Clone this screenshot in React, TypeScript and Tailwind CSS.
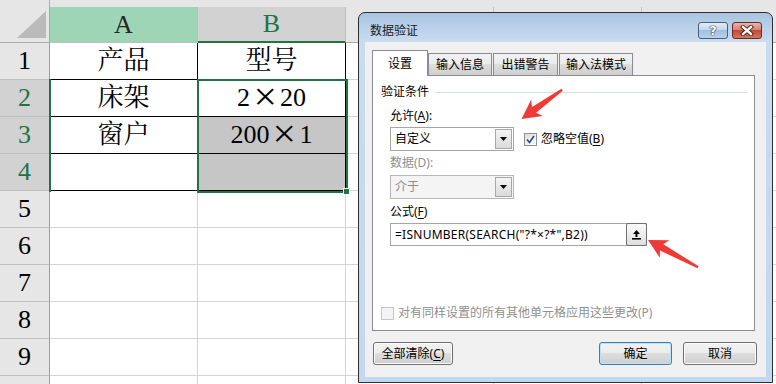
import React from "react";

const cells: Record<number, string[]> = {
  1: ["产品", "型号"],
  2: ["床架", "2×20"],
  3: ["窗户", "200×1"],
  4: ["", ""],
};

// the × in the sheet is a full-width glyph
function CellText({ text }: { text: string }) {
  const parts = text.split("×");
  return (
    <span className="whitespace-nowrap">
      {parts.map((p, i) => (
        <React.Fragment key={i}>
          {i > 0 && (
            <span className="inline-block w-[30px] text-center">
              <span className="inline-block origin-center scale-x-[1.6] scale-y-[1.5] font-light">×</span>
            </span>
          )}
          {p}
        </React.Fragment>
      ))}
    </span>
  );
}

function Sheet() {
  const rows = [1, 2, 3, 4, 5, 6, 7, 8, 9, 10];
  const cols = ["A", "B", "C", "D", "E"];
  return (
    <div className="relative grid grid-cols-[50px_148px_148px_148px_148px_148px] grid-rows-[43px_repeat(10,37px)] font-['Liberation_Serif','Noto_Serif_CJK_SC','Noto_Sans_CJK_SC',serif] text-[26px] leading-none">
      {/* corner */}
      <div className="flex items-end justify-end border-r border-b border-[#ababab] bg-[#e6e6e6] pr-[3px] pb-[4px]">
        <div className="h-[27px] w-[29px] bg-[#bababa] [clip-path:polygon(100%_0,100%_100%,0_100%)]" />
      </div>

      {cols.map((c) => (
        <div key={c} className="flex flex-col bg-[#e6e6e6]">
          <div className="h-[7px]" />
          {c === "A" ? (
            <div className="flex flex-1 items-center justify-center border-r border-b border-[#bdbdbd] bg-[#9fd5b7] text-[#262626]">
              A
            </div>
          ) : c === "B" ? (
            <div className="flex flex-1 items-center justify-center border-r border-[#bdbdbd] border-b-2 border-b-[#217346] bg-[#d2d2d2] text-[#217346]">
              B
            </div>
          ) : (
            <div className="flex flex-1 items-center justify-center border-r border-b border-[#c6c6c6] border-b-[#ababab] text-[#262626]">
              {c}
            </div>
          )}
        </div>
      ))}

      {rows.map((r) => (
        <React.Fragment key={r}>
          <div
            className={`flex items-center justify-center border-r border-b border-r-[#9b9b9b] border-b-[#bfbfbf] ${
              r >= 2 && r <= 4 ? "bg-[#d2d2d2] text-[#217346]" : "bg-[#e6e6e6] text-black"
            }`}
          >
            {r < 10 ? r : null}
          </div>
          {cols.map((c, ci) => {
            const inTable = r <= 4 && ci < 2;
            const filled = ci === 1 && (r === 3 || r === 4);
            return (
              <div
                key={c}
                className={`flex items-center justify-center border-r border-b text-black ${
                  inTable ? "border-black" : "border-[#d4d4d4]"
                } ${filled ? "bg-[#c6c6c6]" : "bg-white"}`}
              >
                {inTable && cells[r][ci] ? <CellText text={cells[r][ci]} /> : null}
              </div>
            );
          })}
        </React.Fragment>
      ))}

      {/* selection */}
      <div className="absolute left-[49px] top-[79px] h-[113px] w-[2px] bg-[#217346]" />
      <div className="absolute left-[197px] top-[79px] h-[114px] w-[151px] border-2 border-[#217346]" />
      <div className="absolute left-[343px] top-[188px] h-[7px] w-[7px] border border-white bg-[#217346]" />
    </div>
  );
}

function Btn({
  children,
  className = "",
  primary = false,
}: {
  children: React.ReactNode;
  className?: string;
  primary?: boolean;
}) {
  return (
    <div
      className={`flex h-[23px] items-center justify-center rounded-[3px] border bg-[linear-gradient(to_bottom,#f2f2f2_0%,#ebebeb_50%,#dddddd_50%,#cfcfcf_100%)] ${
        primary
          ? "border-[#3c7fb1] shadow-[inset_0_0_0_1px_#b9e3fb]"
          : "border-[#707070] shadow-[inset_0_0_0_1px_#fbfbfb]"
      } ${className}`}
    >
      {children}
    </div>
  );
}

function Select({ value, disabled = false }: { value: string; disabled?: boolean }) {
  return (
    <div
      className={`flex h-[24px] w-[124px] items-center border p-px ${
        disabled ? "border-[#b8b8b8] bg-[#f4f4f4] text-[#8f8f8f]" : "border-[#a5a5a5] bg-white text-black"
      }`}
    >
      <span className="flex-1 pl-[3px]">{value}</span>
      <div className="flex h-full w-[17px] items-center justify-center border border-[#a8a8a8] bg-[linear-gradient(to_bottom,#f4f4f4,#dadada)]">
        <svg width="7" height="4" viewBox="0 0 7 4">
          <polygon points="0,0 7,0 3.5,4" fill="#000" />
        </svg>
      </div>
    </div>
  );
}

function U({ children }: { children: React.ReactNode }) {
  return <span className="underline decoration-1 underline-offset-[2px]">{children}</span>;
}

function Dialog() {
  return (
    <div className="absolute left-[358px] top-[12px] flex h-[371px] w-[415px] flex-col rounded-t-[7px] border border-[#2f2f2f] bg-[linear-gradient(to_bottom,#a9c4e1_0px,#c9dcf0_28px,#c2d8ee_100%)] font-['Noto_Sans','Noto_Sans_CJK_SC',sans-serif] text-[12px] leading-[16px] text-black">
      {/* title bar */}
      <div className="flex h-[29px] items-center pt-[6px] pl-[11px] pr-[10px]">
        <span className="text-[#1a1a1a]">数据验证</span>
        <div className="ml-auto flex gap-[4px]">
          <div className="flex h-[17px] w-[30px] items-center justify-center rounded-[3px] border border-[#4c5d78] bg-[linear-gradient(to_bottom,#e3ecf7_0%,#c4d6ec_45%,#a3bfe0_50%,#b9d1ec_100%)]">
            <span className="font-['DejaVu_Sans',sans-serif] text-[13px] font-bold leading-none text-white [text-shadow:0_0_1px_#1e2b44,0_0_1px_#1e2b44,0_0_1px_#1e2b44]">
              ?
            </span>
          </div>
          <div className="flex h-[17px] w-[30px] items-center justify-center rounded-[3px] border border-[#6b2a26] bg-[linear-gradient(to_bottom,#eab3a8_0%,#d8836f_45%,#c44a36_50%,#d5755f_100%)]">
            <svg width="14" height="11" viewBox="0 0 14 11">
              <path d="M3 2 L11 9 M11 2 L3 9" stroke="#3a1a18" strokeWidth="4.2" strokeLinecap="square" />
              <path d="M3 2 L11 9 M11 2 L3 9" stroke="#ffffff" strokeWidth="2.4" strokeLinecap="square" />
            </svg>
          </div>
        </div>
      </div>

      {/* client area */}
      <div className="mx-[6px] mb-[5px] flex flex-1 flex-col bg-[#f0f0f0] pt-[8px] pl-[7px] pr-[11px]">
        {/* tabs */}
        <div className="flex h-[25px] items-end">
          <div className="relative z-10 -mb-px flex h-[26px] w-[56px] items-center justify-center border border-b-0 border-[#898c95] bg-white">
            设置
          </div>
          {[
            { t: "输入信息", w: "w-[64px]" },
            { t: "出错警告", w: "ml-px w-[65px]" },
            { t: "输入法模式", w: "ml-px w-[74px]" },
          ].map((tab) => (
            <div
              key={tab.t}
              className={`flex h-[22px] items-center justify-center border border-b-0 border-[#898c95] bg-[linear-gradient(to_bottom,#f2f2f2_0%,#ebebeb_50%,#dddddd_50%,#cfcfcf_100%)] ${tab.w}`}
            >
              {tab.t}
            </div>
          ))}
        </div>

        {/* panel */}
        <div className="flex h-[256px] flex-col border border-[#898c95] bg-white pt-[8px] pl-[8px] pb-[9px]">
          <div className="flex items-center">
            <span>验证条件</span>
            <div className="ml-[6px] mr-[6px] h-px flex-1 bg-[#d5dfe5]" />
          </div>

          <div className="flex flex-col pl-[9px]">
            <div className="mt-[8px]">
              允许(<U>A</U>):
            </div>
            <div className="mt-[3px] flex items-center">
              <Select value="自定义" />
              <div className="ml-[10px] flex h-[13px] w-[13px] items-center justify-center border border-[#8e8f8f] bg-[linear-gradient(135deg,#dcdcdc,#ffffff)]">
                <svg width="9" height="9" viewBox="0 0 9 9">
                  <path d="M1 4.5 L3.5 7.5 L8 1" fill="none" stroke="#2b4a8a" strokeWidth="1.6" />
                </svg>
              </div>
              <span className="ml-[4px]">
                忽略空值(<U>B</U>)
              </span>
            </div>

            <div className="mt-[4px] text-[#8f8f8f]">数据(D):</div>
            <div className="mt-[4px]">
              <Select value="介于" disabled />
            </div>

            <div className="mt-[5px]">
              公式(<U>F</U>)
            </div>
            <div className="mt-[3px] flex h-[23px] w-[257px] items-center border border-[#a5a5a5] bg-white">
              <span className="flex-1 pl-[4px] tracking-[0.25px] whitespace-nowrap">=ISNUMBER(SEARCH("?*×?*",B2))</span>
              <div className="-my-px -mr-px flex h-[23px] w-[21px] items-center justify-center rounded-[2px] border border-[#707070] bg-[linear-gradient(to_bottom,#fbfbfb,#dedede)]">
                <svg width="11" height="12" viewBox="0 0 11 12">
                  <polygon points="5.5,1 9,5 2,5" fill="#000" />
                  <rect x="4.5" y="5" width="2" height="3" fill="#000" />
                  <rect x="1" y="9" width="9" height="1.6" fill="#000" />
                </svg>
              </div>
            </div>
          </div>

          <div className="mt-auto flex items-center text-[#8f8f8f]">
            <div className="h-[13px] w-[13px] border border-[#c5c5c5] bg-[#f4f4f4]" />
            <span className="ml-[4px]">对有同样设置的所有其他单元格应用这些更改(P)</span>
          </div>
        </div>

        {/* buttons */}
        <div className="mt-[11px] flex">
          <Btn className="ml-px w-[80px]">
            <span>
              全部清除(<U>C</U>)
            </span>
          </Btn>
          <Btn primary className="ml-auto w-[73px]">
            确定
          </Btn>
          <Btn className="ml-[11px] -mr-[2px] w-[74px]">取消</Btn>
        </div>
      </div>
    </div>
  );
}

function Arrows() {
  const shape = (len: number) =>
    `0,0 19,-10 15.5,-3.5 ${len},-1.2 ${len},1.2 15.5,3.5 19,10`;
  return (
    <svg className="pointer-events-none absolute left-0 top-0" width="776" height="384">
      <polygon points={shape(50)} fill="#f03a35" transform="translate(521.5 119) rotate(-35.7)" />
      <polygon points={shape(57)} fill="#f03a35" transform="translate(648 240) rotate(28.6)" />
    </svg>
  );
}

export default function App() {
  return (
    <div className="relative h-[384px] w-[776px] overflow-hidden bg-white">
      <Sheet />
      <Dialog />
      <Arrows />
    </div>
  );
}
